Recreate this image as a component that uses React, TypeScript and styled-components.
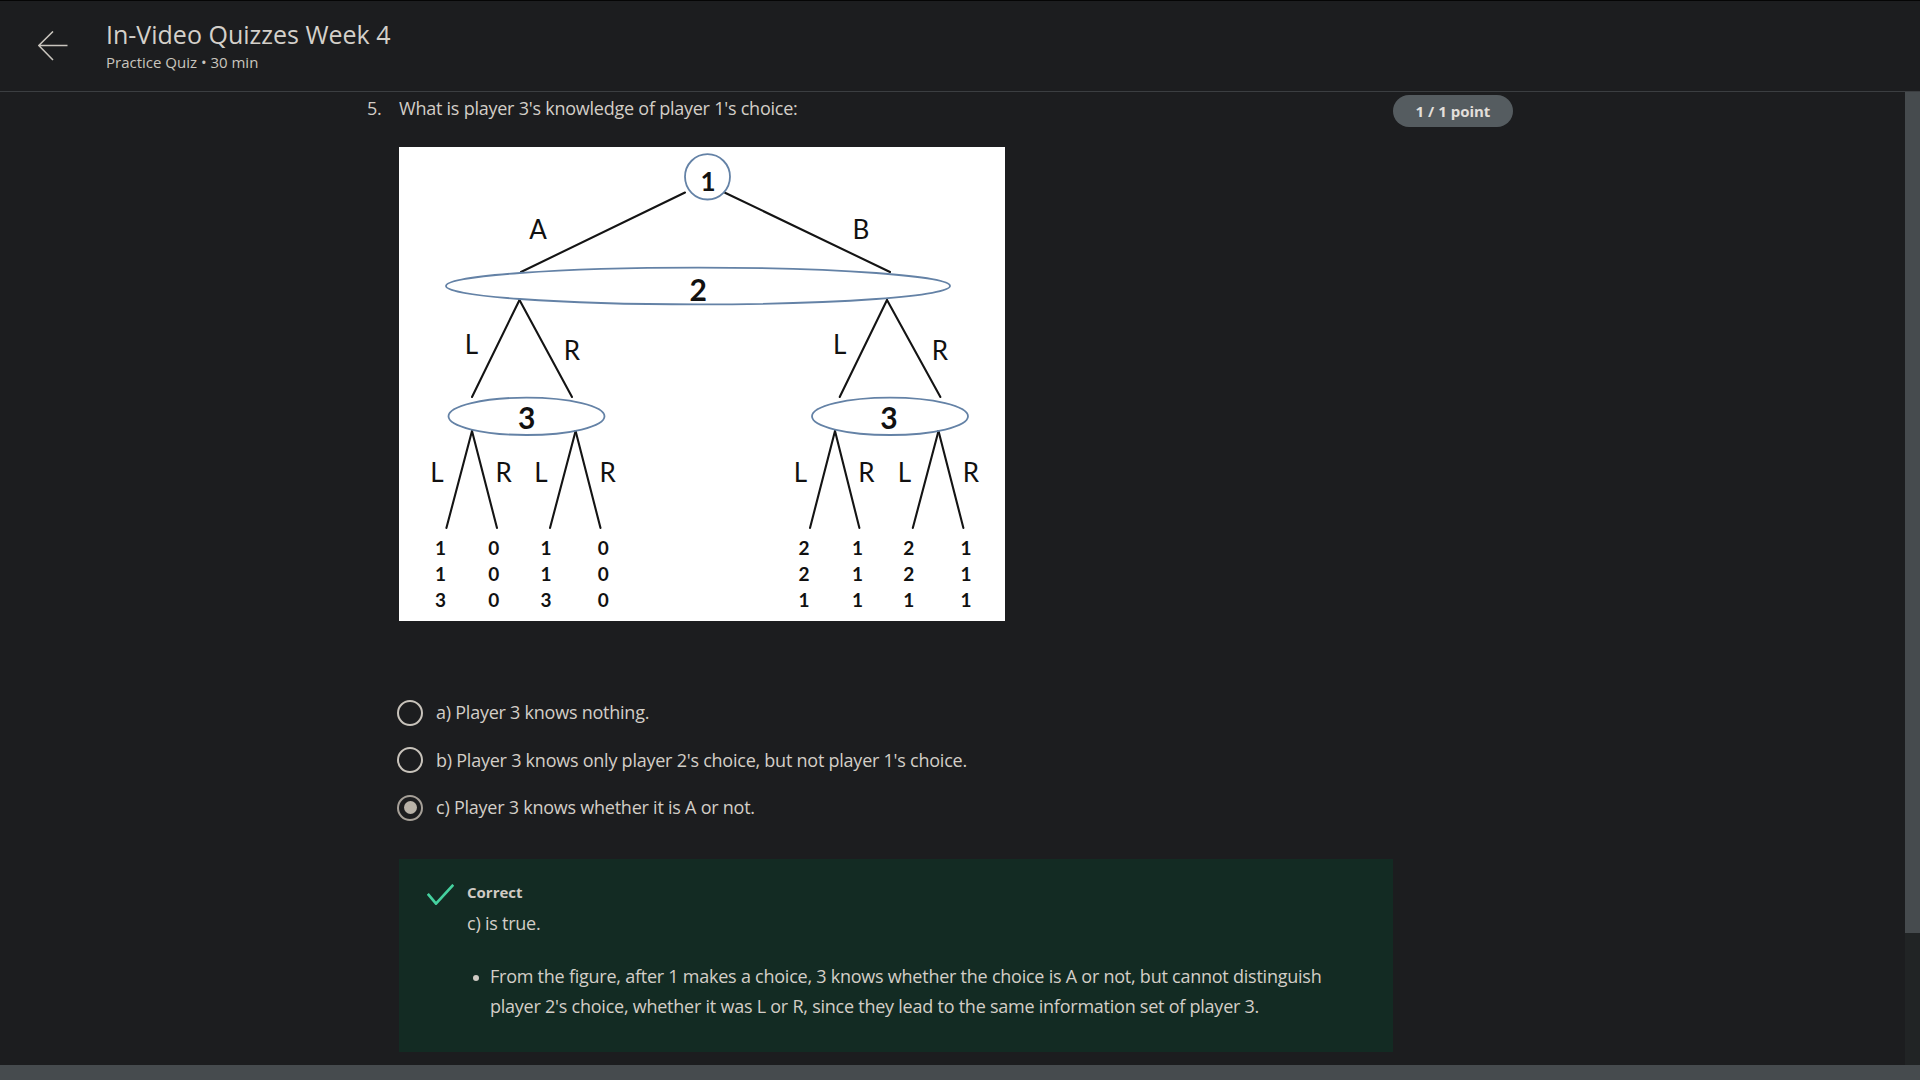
import React from "react";
import styled, { createGlobalStyle } from "styled-components";

const GlobalStyle = createGlobalStyle`
  html, body {
    margin: 0;
    padding: 0;
    height: 100%;
    overflow: hidden;
    background: #1c1d1f;
  }
  #root { height: 100%; }
  * { box-sizing: border-box; }
`;

const Page = styled.div`
  height: 100vh;
  display: flex;
  flex-direction: column;
  background: #1c1d1f;
  font-family: "Open Sans", "Noto Sans", sans-serif;
  color: #d3cec7;
`;

const Header = styled.header`
  flex: none;
  height: 92px;
  border-top: 1px solid #050505;
  border-bottom: 1px solid #3b3e41;
  display: flex;
  align-items: center;
  padding-left: 38px;
  gap: 38px;
  background: #1c1d1f;
`;

const BackButton = styled.button`
  width: 30px;
  height: 30px;
  padding: 0;
  border: 0;
  background: none;
  display: flex;
  cursor: pointer;
`;

const TitleBlock = styled.div`
  display: flex;
  flex-direction: column;
  margin-top: -3px;
`;

const Title = styled.h1`
  margin: 0;
  font-size: 25px;
  line-height: 32px;
  font-weight: 400;
  color: #d4d0ca;
`;

const Subtitle = styled.div`
  margin-top: 2px;
  font-size: 15px;
  line-height: 20px;
  color: #c9c5be;
`;

const Body = styled.div`
  flex: 1;
  min-height: 0;
  display: grid;
  grid-template-columns: 1fr 15px;
  grid-template-rows: 1fr 15px;
`;

const Viewport = styled.main`
  min-height: 0;
  overflow: hidden;
`;

const VTrack = styled.div`
  background: #212425;
  display: flex;
  flex-direction: column;
`;

const VThumb = styled.div`
  flex: none;
  background: #464b4e;
`;

const HBar = styled.div`
  grid-column: 1 / -1;
  background: #464b4e;
`;

const Content = styled.div`
  padding: 3px 0 166px 367px;
`;

const QuestionGrid = styled.div`
  display: grid;
  grid-template-columns: 32px 994px 120px;
  align-items: start;
`;

const BodyText = styled.div`
  font-size: 18px;
  line-height: 27px;
  letter-spacing: -0.24px;
  color: #d3cec7;
`;

const QNumber = styled(BodyText)``;

const QBody = styled.div`
  display: flex;
  flex-direction: column;
`;

const QText = styled(BodyText)``;

const Badge = styled.div`
  margin-top: 0;
  height: 32px;
  border-radius: 16px;
  background: #555c60;
  color: #e2dfda;
  font-weight: 700;
  font-size: 15px;
  line-height: 32px;
  text-align: center;
  white-space: nowrap;
`;

const Figure = styled.svg`
  display: block;
  margin-top: 25px;
  background: #ffffff;
`;

const OptionList = styled.div`
  display: flex;
  flex-direction: column;
  margin-top: 68px;
`;

const Option = styled.label`
  display: flex;
  align-items: center;
  gap: 13px;
  height: 47.5px;
  font-size: 18px;
  line-height: 27px;
  letter-spacing: -0.24px;
  color: #d3cec7;
  margin-left: -2px;
`;

const Radio = styled.span<{ $checked?: boolean }>`
  flex: none;
  width: 26px;
  height: 26px;
  border-radius: 50%;
  border: 2.6px solid ${(p) => (p.$checked ? "#a6a098" : "#c8c3bb")};
  display: flex;
  align-items: center;
  justify-content: center;

  &::after {
    content: "";
    display: ${(p) => (p.$checked ? "block" : "none")};
    width: 13px;
    height: 13px;
    border-radius: 50%;
    background: #b8b2a8;
  }
`;

const Feedback = styled.div`
  margin-top: 27px;
  background: #132b23;
  padding: 23px 32px 31px 28px;
  display: grid;
  grid-template-columns: 40px 1fr;
`;

const CheckIcon = styled.svg`
  display: block;
  margin-top: 2px;
`;

const FeedbackBody = styled.div`
  display: flex;
  flex-direction: column;
`;

const FeedbackTitle = styled.div`
  font-weight: 700;
  font-size: 15px;
  line-height: 20px;
  color: #cfcac3;
`;

const FeedbackText = styled(BodyText)`
  margin-top: 8px;
`;

const BulletList = styled.ul`
  list-style: none;
  margin: 24px 0 0;
  padding: 0;
`;

const BulletItem = styled.li`
  display: flex;
  align-items: flex-start;
  font-size: 18px;
  line-height: 30px;
  letter-spacing: -0.24px;
  color: #d3cec7;
`;

const Dot = styled.span`
  flex: none;
  width: 6px;
  height: 6px;
  border-radius: 50%;
  background: #cfcac3;
  margin: 14px 11px 0 6px;
`;

const lines: [number, number, number, number][] = [
  [286, 45.5, 122, 125],
  [326, 45.7, 491, 125],
  [120.5, 153, 73, 250],
  [120.5, 153, 173, 250],
  [488, 153, 440.7, 250],
  [488, 153, 541.4, 250],
  [73, 284, 47.4, 381],
  [73, 284, 98, 381],
  [176.6, 284, 151, 381],
  [176.6, 284, 201.5, 381],
  [436, 284, 411, 381],
  [436, 284, 460.4, 381],
  [539.5, 284, 513.8, 381],
  [539.5, 284, 564.4, 381],
];

const branchLabels: [string, number, number][] = [
  ["A", 139, 91.5],
  ["B", 462, 91.5],
  ["L", 72.5, 207],
  ["R", 173, 213],
  ["L", 440.7, 207],
  ["R", 541, 213],
  ["L", 37.9, 335],
  ["R", 104.7, 335],
  ["L", 142, 335],
  ["R", 208.6, 335],
  ["L", 401.5, 335],
  ["R", 467.5, 335],
  ["L", 505.5, 335],
  ["R", 572, 335],
];

const payoffs: [number, string[]][] = [
  [41.5, ["1", "1", "3"]],
  [94.8, ["0", "0", "0"]],
  [147, ["1", "1", "3"]],
  [204.3, ["0", "0", "0"]],
  [405, ["2", "2", "1"]],
  [458.5, ["1", "1", "1"]],
  [509.8, ["2", "2", "1"]],
  [567, ["1", "1", "1"]],
];

const GameTree = () => (
  <Figure width={606} height={474} viewBox="0 0 606 474">
    <g stroke="#141414" strokeWidth={2.1} strokeLinecap="round">
      {lines.map(([x1, y1, x2, y2], i) => (
        <line key={i} x1={x1} y1={y1} x2={x2} y2={y2} />
      ))}
    </g>
    <g stroke="#6482a6" strokeWidth={1.8} fill="none">
      <ellipse cx={308.5} cy={29.8} rx={22.5} ry={22.7} />
      <ellipse cx={299} cy={139} rx={252} ry={18.4} />
      <ellipse cx={127.5} cy={269.3} rx={78} ry={18.7} />
      <ellipse cx={491} cy={269.3} rx={78} ry={18.7} />
    </g>
    <g fontFamily="Lato, 'Open Sans', sans-serif" fill="#111" textAnchor="middle">
      <text x={309} y={43.5} fontSize={26} fontWeight={700}>1</text>
      <text x={299.3} y={153.5} fontSize={30} fontWeight={700}>2</text>
      <text x={127.6} y={281.5} fontSize={30} fontWeight={700}>3</text>
      <text x={490} y={281.5} fontSize={30} fontWeight={700}>3</text>
      {branchLabels.map(([t, x, y], i) => (
        <text key={i} x={x} y={y} fontSize={26}>
          {t}
        </text>
      ))}
      {payoffs.map(([x, vals]) =>
        vals.map((v, j) => (
          <text key={`${x}-${j}`} x={x} y={407.5 + j * 26} fontSize={19} fontWeight={700}>
            {v}
          </text>
        ))
      )}
    </g>
  </Figure>
);

const options = [
  { id: "a", text: "a) Player 3 knows nothing.", checked: false },
  { id: "b", text: "b) Player 3 knows only player 2's choice, but not player 1's choice.", checked: false },
  { id: "c", text: "c) Player 3 knows whether it is A or not.", checked: true },
];

const scroll = { viewport: 973, content: 1126 };

export default function App() {
  return (
    <>
      <GlobalStyle />
      <Page>
        <Header>
          <BackButton aria-label="Back">
            <svg width="30" height="30" viewBox="0 0 30 30" fill="none">
              <path d="M0.8 14.5 H29.5 M15 0.5 L0.8 14.5 L15 29" stroke="#c9c5be" strokeWidth="1.6" />
            </svg>
          </BackButton>
          <TitleBlock>
            <Title>In-Video Quizzes Week 4</Title>
            <Subtitle>Practice Quiz • 30 min</Subtitle>
          </TitleBlock>
        </Header>
        <Body>
          <Viewport>
            <Content>
              <QuestionGrid>
                <QNumber>5.</QNumber>
                <QBody>
                  <QText>What is player 3's knowledge of player 1's choice:</QText>
                  <GameTree />
                  <OptionList>
                    {options.map((o) => (
                      <Option key={o.id}>
                        <Radio $checked={o.checked} />
                        {o.text}
                      </Option>
                    ))}
                  </OptionList>
                  <Feedback>
                    <CheckIcon width="27" height="21" viewBox="0 0 27 21" fill="none">
                      <path d="M0.8 9.8 L9 19.6 L26.3 0.8" stroke="#45d19f" strokeWidth="2.7" />
                    </CheckIcon>
                    <FeedbackBody>
                      <FeedbackTitle>Correct</FeedbackTitle>
                      <FeedbackText>c) is true.</FeedbackText>
                      <BulletList>
                        <BulletItem>
                          <Dot />
                          <span>
                            From the figure, after 1 makes a choice, 3 knows whether the choice is A or not, but cannot
                            distinguish player 2's choice, whether it was L or R, since they lead to the same information
                            set of player 3.
                          </span>
                        </BulletItem>
                      </BulletList>
                    </FeedbackBody>
                  </Feedback>
                </QBody>
                <Badge>1 / 1 point</Badge>
              </QuestionGrid>
            </Content>
          </Viewport>
          <VTrack>
            <VThumb style={{ height: `${(scroll.viewport / scroll.content) * 100}%` }} />
          </VTrack>
          <HBar />
        </Body>
      </Page>
    </>
  );
}
